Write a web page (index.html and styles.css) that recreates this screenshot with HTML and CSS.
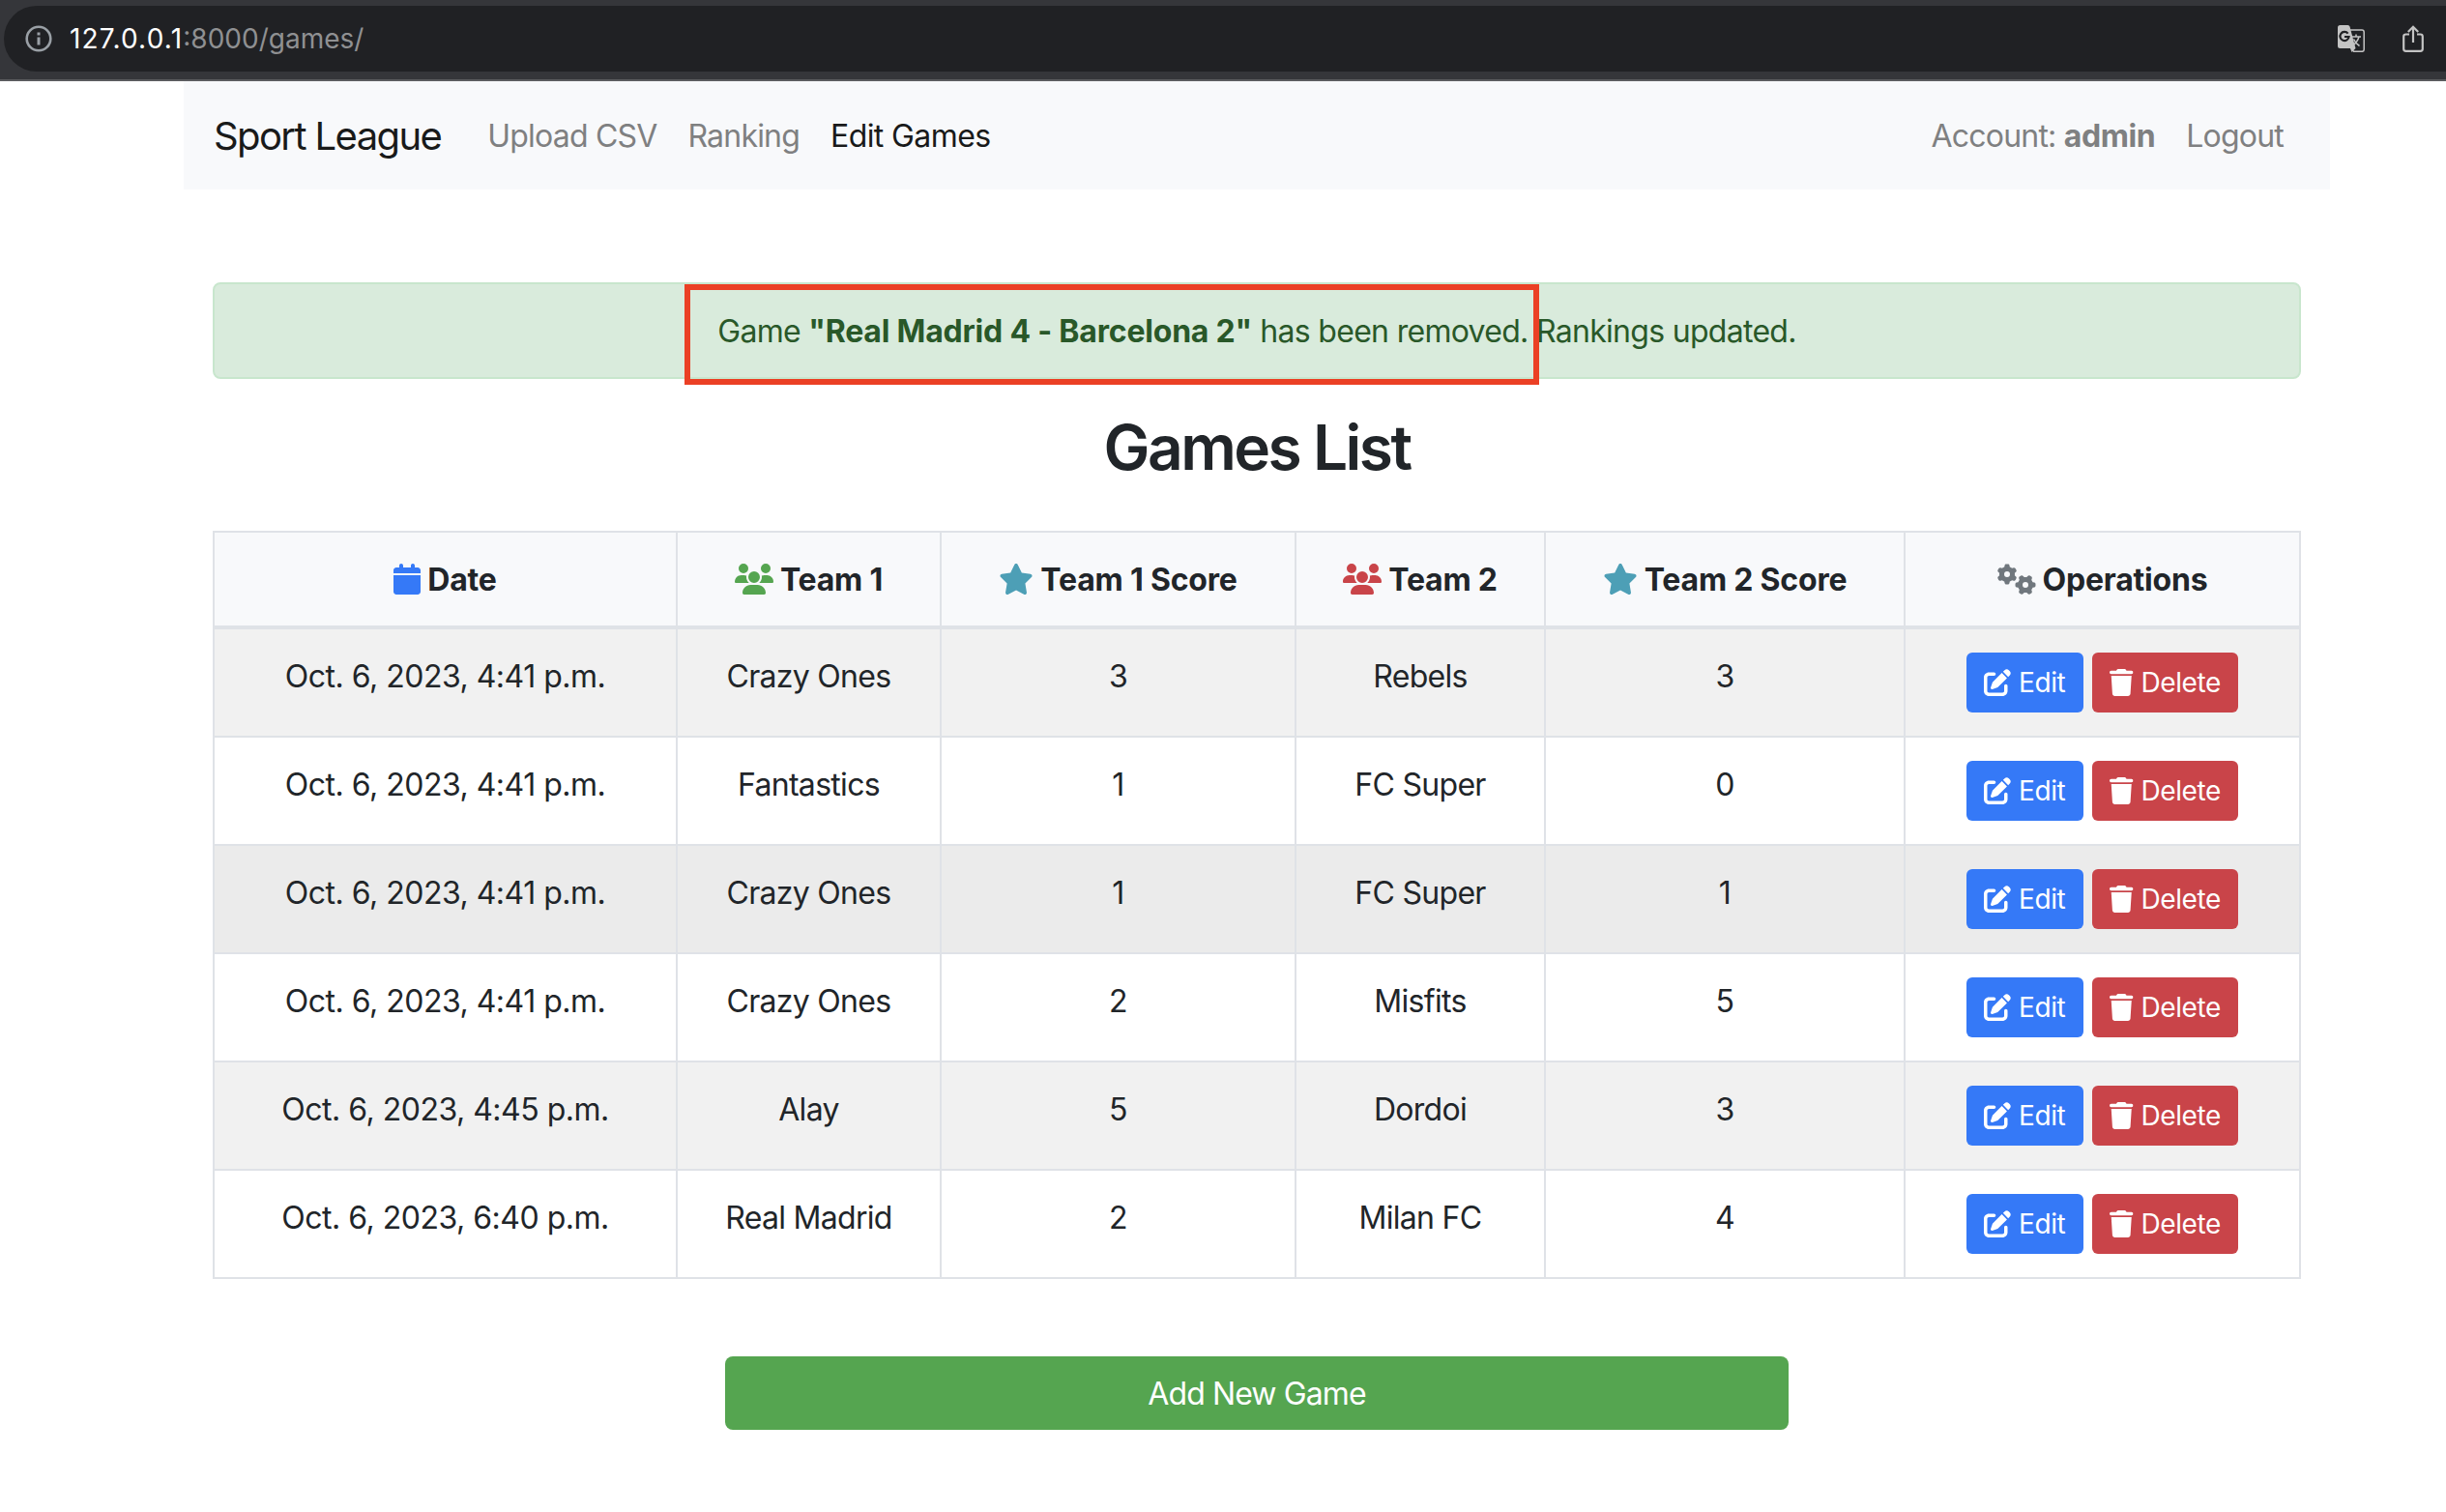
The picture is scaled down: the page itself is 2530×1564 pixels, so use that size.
FILE: index.html
```
<!DOCTYPE html>
<html lang="en">
<head>
<meta charset="utf-8">
<title>Games List</title>
<link rel="stylesheet" href="styles.css">
</head>
<body>
<svg class="sprite" aria-hidden="true">
  <symbol id="calendar" viewBox="0 0 448 512"><path d="M96 32V64H48C21.5 64 0 85.5 0 112v48H448V112c0-26.500-21.500-48-48-48H352V32c0-17.700-14.300-32-32-32s-32 14.300-32 32V64H160V32c0-17.700-14.300-32-32-32S96 14.300 96 32zM448 192H0V464c0 26.500 21.500 48 48 48H400c26.500 0 48-21.500 48-48V192z"/></symbol>
  <symbol id="users" viewBox="0 0 640 512"><path d="M144 0a80 80 0 1 1 0 160A80 80 0 1 1 144 0zM512 0a80 80 0 1 1 0 160A80 80 0 1 1 512 0zM0 298.7C0 239.800 47.800 192 106.700 192h42.700c15.900 0 31 3.500 44.600 9.700c-1.300 7.200-1.900 14.700-1.900 22.300c0 38.200 16.800 72.500 43.300 96c-.2 0-.4 0-.7 0H21.300C9.600 320 0 310.400 0 298.700zM405.300 320c-.2 0-.4 0-.7 0c26.600-23.500 43.300-57.800 43.300-96c0-7.600-.7-15-1.900-22.300c13.600-6.300 28.700-9.700 44.600-9.700h42.700C592.200 192 640 239.800 640 298.700c0 11.800-9.600 21.300-21.300 21.300H405.300zM224 224a96 96 0 1 1 192 0 96 96 0 1 1 -192 0zM128 485.300C128 411.700 187.700 352 261.300 352H378.700C452.300 352 512 411.700 512 485.300c0 14.700-11.900 26.700-26.700 26.700H154.700c-14.700 0-26.700-11.900-26.700-26.700z"/></symbol>
  <symbol id="star" viewBox="0 0 576 512"><path d="M316.900 18C311.600 7 300.400 0 288.100 0s-23.400 7-28.800 18L195 150.300 51.400 171.500c-12 1.800-22 10.200-25.700 21.700s-.7 24.200 7.900 32.700L137.800 329 113.200 474.700c-2 12 3 24.200 12.900 31.300s23 8 33.800 2.300l128.300-68.500 128.300 68.500c10.800 5.700 23.900 4.900 33.800-2.300s14.900-19.300 12.900-31.300L438.500 329 542.700 225.900c8.600-8.500 11.700-21.200 7.900-32.700s-13.700-19.900-25.700-21.700L381.200 150.300 316.900 18z"/></symbol>
  <symbol id="gears" viewBox="0 0 640 512">
    <path id="gear" d="M308.500 135.300c7.100-6.300 9.900-16.200 6.200-25c-2.300-5.300-4.800-10.500-7.600-15.500L304 89.400c-3-5-6.300-9.900-9.800-14.600c-5.700-7.600-15.700-10.100-24.700-7.100l-28.200 9.300c-10.700-8.800-23-16-36.200-20.900L199 27.100c-1.900-9.300-9.100-16.700-18.500-17.800C173.900 8.400 167.200 8 160.400 8h-.7c-6.800 0-13.500 .4-20.100 1.200c-9.400 1.100-16.600 8.600-18.500 17.800L115 56.100c-13.300 5-25.500 12.100-36.200 20.900L50.500 67.800c-9-3-19-.5-24.700 7.100c-3.500 4.700-6.800 9.600-9.900 14.600l-3 5.300c-2.800 5-5.300 10.200-7.600 15.600c-3.700 8.700-.9 18.600 6.200 25l22.200 19.800C32.600 161.900 32 168.900 32 176s.6 14.100 1.700 20.900L11.500 216.700c-7.100 6.300-9.900 16.200-6.200 25c2.300 5.300 4.800 10.500 7.600 15.600l3 5.200c3 5.100 6.300 9.900 9.900 14.600c5.700 7.600 15.700 10.100 24.700 7.100l28.200-9.300c10.700 8.800 23 16 36.200 20.900l6.100 29.100c1.900 9.300 9.100 16.700 18.500 17.800c6.700 .8 13.500 1.200 20.400 1.200s13.700-.4 20.400-1.200c9.400-1.100 16.600-8.600 18.500-17.800l6.100-29.100c13.300-5 25.500-12.100 36.200-20.900l28.200 9.300c9 3 19 .5 24.700-7.100c3.500-4.700 6.800-9.500 9.800-14.600l3.100-5.400c2.800-5 5.300-10.200 7.600-15.500c3.700-8.700 .9-18.600-6.200-25l-22.200-19.800c1.100-6.800 1.700-13.800 1.700-20.900s-.6-14.100-1.700-20.900l22.200-19.800zM112 176a48 48 0 1 1 96 0 48 48 0 1 1 -96 0z"/>
    <use href="#gear" transform="translate(464 352) rotate(90) translate(-160 -176)"/>
  </symbol>
  <symbol id="pen" viewBox="0 0 512 512"><path d="M471.600 21.700c-21.900-21.900-57.300-21.900-79.200 0L362.300 51.700l97.900 97.900 30.100-30.100c21.900-21.900 21.900-57.300 0-79.200L471.600 21.700zm-299.200 220c-6.100 6.100-10.800 13.600-13.500 21.900l-29.600 88.800c-2.900 8.600-.6 18.100 5.800 24.600s15.900 8.700 24.600 5.800l88.800-29.600c8.200-2.700 15.700-7.400 21.900-13.500L437.700 172.300 339.700 74.300 172.400 241.700zM96 64C43 64 0 107 0 160V416c0 53 43 96 96 96H352c53 0 96-43 96-96V320c0-17.700-14.300-32-32-32s-32 14.300-32 32v96c0 17.700-14.300 32-32 32H96c-17.700 0-32-14.300-32-32V160c0-17.700 14.300-32 32-32h96c17.700 0 32-14.300 32-32s-14.300-32-32-32H96z"/></symbol>
  <symbol id="trash" viewBox="0 0 448 512"><path d="M135.200 17.700L128 32H32C14.300 32 0 46.300 0 64S14.300 96 32 96H416c17.700 0 32-14.300 32-32s-14.300-32-32-32H320l-7.200-14.300C307.400 6.800 296.300 0 284.200 0H163.800c-12.100 0-23.200 6.800-28.600 17.700zM416 128H32L53.200 467c1.600 25.300 22.600 45 47.900 45H346.900c25.300 0 46.300-19.700 47.900-45L416 128z"/></symbol>
</svg>

<header class="browser">
  <div class="omnibox">
    <svg class="info" viewBox="0 0 28 28"><circle cx="14" cy="14" r="12.300" fill="none" stroke="#9aa0a6" stroke-width="2.600"/><path fill="#9aa0a6" d="M12.500 7.500h3v3h-3zM12.500 12.500h3v8h-3z"/></svg>
    <p class="url"><span class="host">127.0.0.1</span><span class="path">:8000/games/</span></p>
    <svg class="translate" viewBox="0 0 28 28">
      <path fill="none" stroke="#c4c4c4" stroke-width="1.500" d="M12 5h13q2.200 0 2.200 2.200v18q0 2.100-2.200 2.100H16.500L13 22"/>
      <path fill="#c4c4c4" d="M2.500 0h8q1.500 0 2 1.500L18.500 24l-4 4-1.500-4H2.500Q0 24 0 21.500v-19Q0 0 2.500 0z"/>
      <path fill="none" stroke="#202124" stroke-width="2.200" d="M10.600 8.600A4.600 4.600 0 1 0 11.600 12H7"/>
      <path fill="none" stroke="#c4c4c4" stroke-width="1.500" d="M14.500 12H24M19 9.500V12M22 12q-1.500 5.500-6.500 9M16.500 14.500q2 4.500 6 7"/>
    </svg>
    <svg class="share" viewBox="0 0 22 28"><path fill="none" stroke="#c4c4c4" stroke-width="2.200" d="M7 9.500H3.500Q1.200 9.500 1.200 11.800V24.500Q1.200 26.800 3.500 26.800h15Q20.800 26.800 20.800 24.500V11.800Q20.800 9.500 18.500 9.500H15M11 18V2M5.800 7L11 1.800 16.200 7"/></svg>
  </div>
</header>

<div class="container">
  <nav class="navbar">
    <a class="brand">Sport League</a>
    <a class="link">Upload CSV</a>
    <a class="link">Ranking</a>
    <a class="link active">Edit Games</a>
    <span class="link account">Account: <b>admin</b></span>
    <a class="link">Logout</a>
  </nav>

  <main>
    <div class="alert">
      <p>Game <b>"Real Madrid 4 - Barcelona 2"</b> has been removed. Rankings updated.</p>
      <div class="highlight"></div>
    </div>
    <h2>Games List</h2>
    <table class="games">
      <colgroup><col class="c1"><col class="c2"><col class="c3"><col class="c4"><col class="c5"><col class="c6"></colgroup>
      <thead>
        <tr>
          <th><div class="head"><svg class="i w28 blue"><use href="#calendar"/></svg><span>Date</span></div></th>
          <th><div class="head"><svg class="i w40 green"><use href="#users"/></svg><span>Team 1</span></div></th>
          <th><div class="head"><svg class="i w36 teal"><use href="#star"/></svg><span>Team 1 Score</span></div></th>
          <th><div class="head"><svg class="i w40 red"><use href="#users"/></svg><span>Team 2</span></div></th>
          <th><div class="head"><svg class="i w36 teal"><use href="#star"/></svg><span>Team 2 Score</span></div></th>
          <th><div class="head"><svg class="i w40 gray"><use href="#gears"/></svg><span>Operations</span></div></th>
        </tr>
      </thead>
      <tbody>
        <tr><td class="date">Oct. 6, 2023, 4:41 p.m.</td><td>Crazy Ones</td><td>3</td><td>Rebels</td><td>3</td><td class="actions"><div class="ops"><a class="btn edit"><svg><use href="#pen"/></svg>Edit</a><a class="btn delete"><svg><use href="#trash"/></svg>Delete</a></div></td></tr>
        <tr><td class="date">Oct. 6, 2023, 4:41 p.m.</td><td>Fantastics</td><td>1</td><td>FC Super</td><td>0</td><td class="actions"><div class="ops"><a class="btn edit"><svg><use href="#pen"/></svg>Edit</a><a class="btn delete"><svg><use href="#trash"/></svg>Delete</a></div></td></tr>
        <tr class="hover"><td class="date">Oct. 6, 2023, 4:41 p.m.</td><td>Crazy Ones</td><td>1</td><td>FC Super</td><td>1</td><td class="actions"><div class="ops"><a class="btn edit"><svg><use href="#pen"/></svg>Edit</a><a class="btn delete"><svg><use href="#trash"/></svg>Delete</a></div></td></tr>
        <tr><td class="date">Oct. 6, 2023, 4:41 p.m.</td><td>Crazy Ones</td><td>2</td><td>Misfits</td><td>5</td><td class="actions"><div class="ops"><a class="btn edit"><svg><use href="#pen"/></svg>Edit</a><a class="btn delete"><svg><use href="#trash"/></svg>Delete</a></div></td></tr>
        <tr><td class="date">Oct. 6, 2023, 4:45 p.m.</td><td>Alay</td><td>5</td><td>Dordoi</td><td>3</td><td class="actions"><div class="ops"><a class="btn edit"><svg><use href="#pen"/></svg>Edit</a><a class="btn delete"><svg><use href="#trash"/></svg>Delete</a></div></td></tr>
        <tr><td class="date">Oct. 6, 2023, 6:40 p.m.</td><td>Real Madrid</td><td>2</td><td>Milan FC</td><td>4</td><td class="actions"><div class="ops"><a class="btn edit"><svg><use href="#pen"/></svg>Edit</a><a class="btn delete"><svg><use href="#trash"/></svg>Delete</a></div></td></tr>
      </tbody>
    </table>
    <a class="add">Add New Game</a>
  </main>
</div>
</body>
</html>
```
FILE: styles.css
```
* { box-sizing: border-box; }
body {
  margin: 0;
  background: #fff;
  color: #212529;
  font: 400 32px/48px Inter, "Liberation Sans", sans-serif;
  letter-spacing: -0.7px;
}
p, h2 { margin: 0; }
b { font-weight: 700; letter-spacing: -0.2px; }
svg { display: block; fill: currentColor; flex: none; }
.sprite { position: absolute; width: 0; height: 0; }

.browser {
  height: 84px;
  padding: 6px 0 8px 4px;
  background: #35363a;
  border-bottom: 2px solid #5b5c5f;
}
.omnibox {
  display: flex;
  align-items: center;
  height: 68px;
  padding: 0 23px 0 22px;
  background: #202124;
  border-radius: 34px 0 0 34px;
}
.info { width: 28px; height: 28px; margin-right: 18px; }
.url { flex: 1; font-size: 28px; letter-spacing: 0; color: #8f9092; }
.host { color: #fff; letter-spacing: 1.2px; }
.translate { width: 28px; height: 28px; margin-right: 39px; }
.share { width: 22px; height: 28px; }

.container { width: 2220px; margin-left: 190px; }
.navbar {
  display: flex;
  align-items: center;
  gap: 32px;
  height: 112px;
  padding: 2px 48px 0 31px;
  background: #f8f9fb;
  color: #7f8081;
  letter-spacing: -0.8px;
}
.navbar b { letter-spacing: -0.4px; }
.brand { margin-right: 16px; font-size: 40px; letter-spacing: -1.6px; color: #191a1a; }
.active { color: #191a1a; letter-spacing: -0.6px; }
.account { margin-left: auto; }

main { padding: 96px 30px 0; }
.alert {
  position: relative;
  height: 100px;
  padding: 25px 24px 23px;
  border: 2px solid #c8e6cd;
  border-radius: 8px;
  background: #d9ebdc;
  color: #295829;
  text-align: center;
}
/* callout frame drawn over the first sentence of the message */
.highlight {
  position: absolute;
  left: 486px;
  top: 0;
  width: 884px;
  height: 104px;
  border: 6px solid #eb4025;
}
h2 {
  margin: 32px 0 48px;
  font-size: 64px;
  font-weight: 560;
  line-height: 77px;
  letter-spacing: -2.500px;
  text-align: center;
}

.games {
  width: 2160px;
  table-layout: fixed;
  border-collapse: separate;
  border-spacing: 0;
  border: solid #dfe2e7;
  border-width: 2px 2px 0 0;
  text-align: center;
}
.c1 { width: 479px; }
.c2 { width: 273px; }
.c3 { width: 367px; }
.c4 { width: 258px; }
.c5 { width: 372px; }
.c6 { width: 409px; }
th, td {
  border: solid #dfe2e7;
  border-width: 0 0 2px 2px;
  padding: 24px 0;
  vertical-align: top;
}
th { height: 100px; border-bottom-width: 4px; background: #f8f9fb; font-weight: 700; letter-spacing: -0.2px; }
td { height: 112px; padding: 25px 0 23px; }
.date { letter-spacing: -0.5px; }
.actions { padding: 24px 0; }
tbody tr:nth-child(odd) { background: #f1f1f1; }
tbody tr.hover { background: #ebebeb; }
.head { display: flex; justify-content: center; align-items: center; gap: 7px; }
.head span { height: 48px; line-height: 50px; }
.i { height: 32px; }
.w28 { width: 28px; }
.w36 { width: 36px; }
.w40 { width: 40px; }
.blue { color: #3579f7; }
.green { color: #55a550; }
.teal { color: #4d9fb6; }
.red { color: #c94449; }
.gray { color: #70777d; }

.ops { display: flex; justify-content: center; gap: 9px; }
.btn {
  display: flex;
  align-items: center;
  gap: 8px;
  height: 62px;
  padding: 0 18px;
  border-radius: 6px;
  color: #fff;
  font-size: 28px;
  letter-spacing: -0.4px;
}
.btn svg { height: 28px; }
.edit { width: 121px; background: #3579f7; }
.edit svg { width: 28px; }
.delete { width: 151px; background: #c94449; }
.delete svg { width: 24.500px; }

.add {
  display: block;
  width: 1100px;
  height: 76px;
  margin: 80px auto 0;
  border-radius: 8px;
  background: #55a550;
  color: #fff;
  line-height: 78px;
  letter-spacing: -0.9px;
  text-align: center;
}
```
